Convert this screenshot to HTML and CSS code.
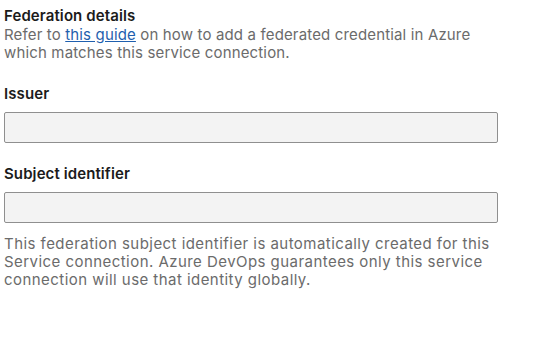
FILE: index.html
```html
<!DOCTYPE html>
<html lang="en">
<head>
    <meta charset="UTF-8">
    <title>Federation details</title>
    <link rel="stylesheet" href="styles.css">
</head>
<body>
    <div class="panel">
        <section class="intro">
            <h2 class="intro-title">Federation details</h2>
            <p class="muted intro-text">Refer to <a href="#" class="link">this guide</a> on how to add a federated credential in Azure<br>which matches this service connection.</p>
        </section>

        <div class="field">
            <label class="field-label">Issuer</label>
            <div class="field-input"></div>
        </div>

        <div class="field field-subject">
            <label class="field-label">Subject identifier</label>
            <div class="field-input"></div>
            <p class="muted field-help">This federation subject identifier is automatically created for this Service connection. Azure DevOps guarantees only this service connection will use that identity globally.</p>
        </div>
    </div>
</body>
</html>
```

FILE: styles.css
```css
* {
    margin: 0;
    padding: 0;
    box-sizing: border-box;
}

body {
    font-family: Inter, 'Liberation Sans', Arial, sans-serif;
    font-size: 15px;
    line-height: 18px;
    color: #1b1b1b;
    background: white;
    padding: 7px 4px;
}

.panel {
    width: 494px;
}

.intro-title {
    font-size: 15px;
    font-weight: 600;
    line-height: 18px;
    letter-spacing: 0.1px;
    margin-bottom: 1px;
}

.muted {
    color: #6b6b6b;
}

.intro-text {
    letter-spacing: 0.15px;
}

.link {
    color: #1f5fae;
    text-decoration: underline;
}

.field {
    margin-top: 23px;
}

.field-subject {
    margin-top: 22px;
}

.field-label {
    display: block;
    font-weight: 600;
    margin-bottom: 9px;
    letter-spacing: 0.1px;
}

.field-input {
    height: 31px;
    background: #f3f3f3;
    border: 1px solid #8f8f8f;
    border-radius: 2px;
}

.field-help {
    margin-top: 12px;
    letter-spacing: 0.45px;
}
```
